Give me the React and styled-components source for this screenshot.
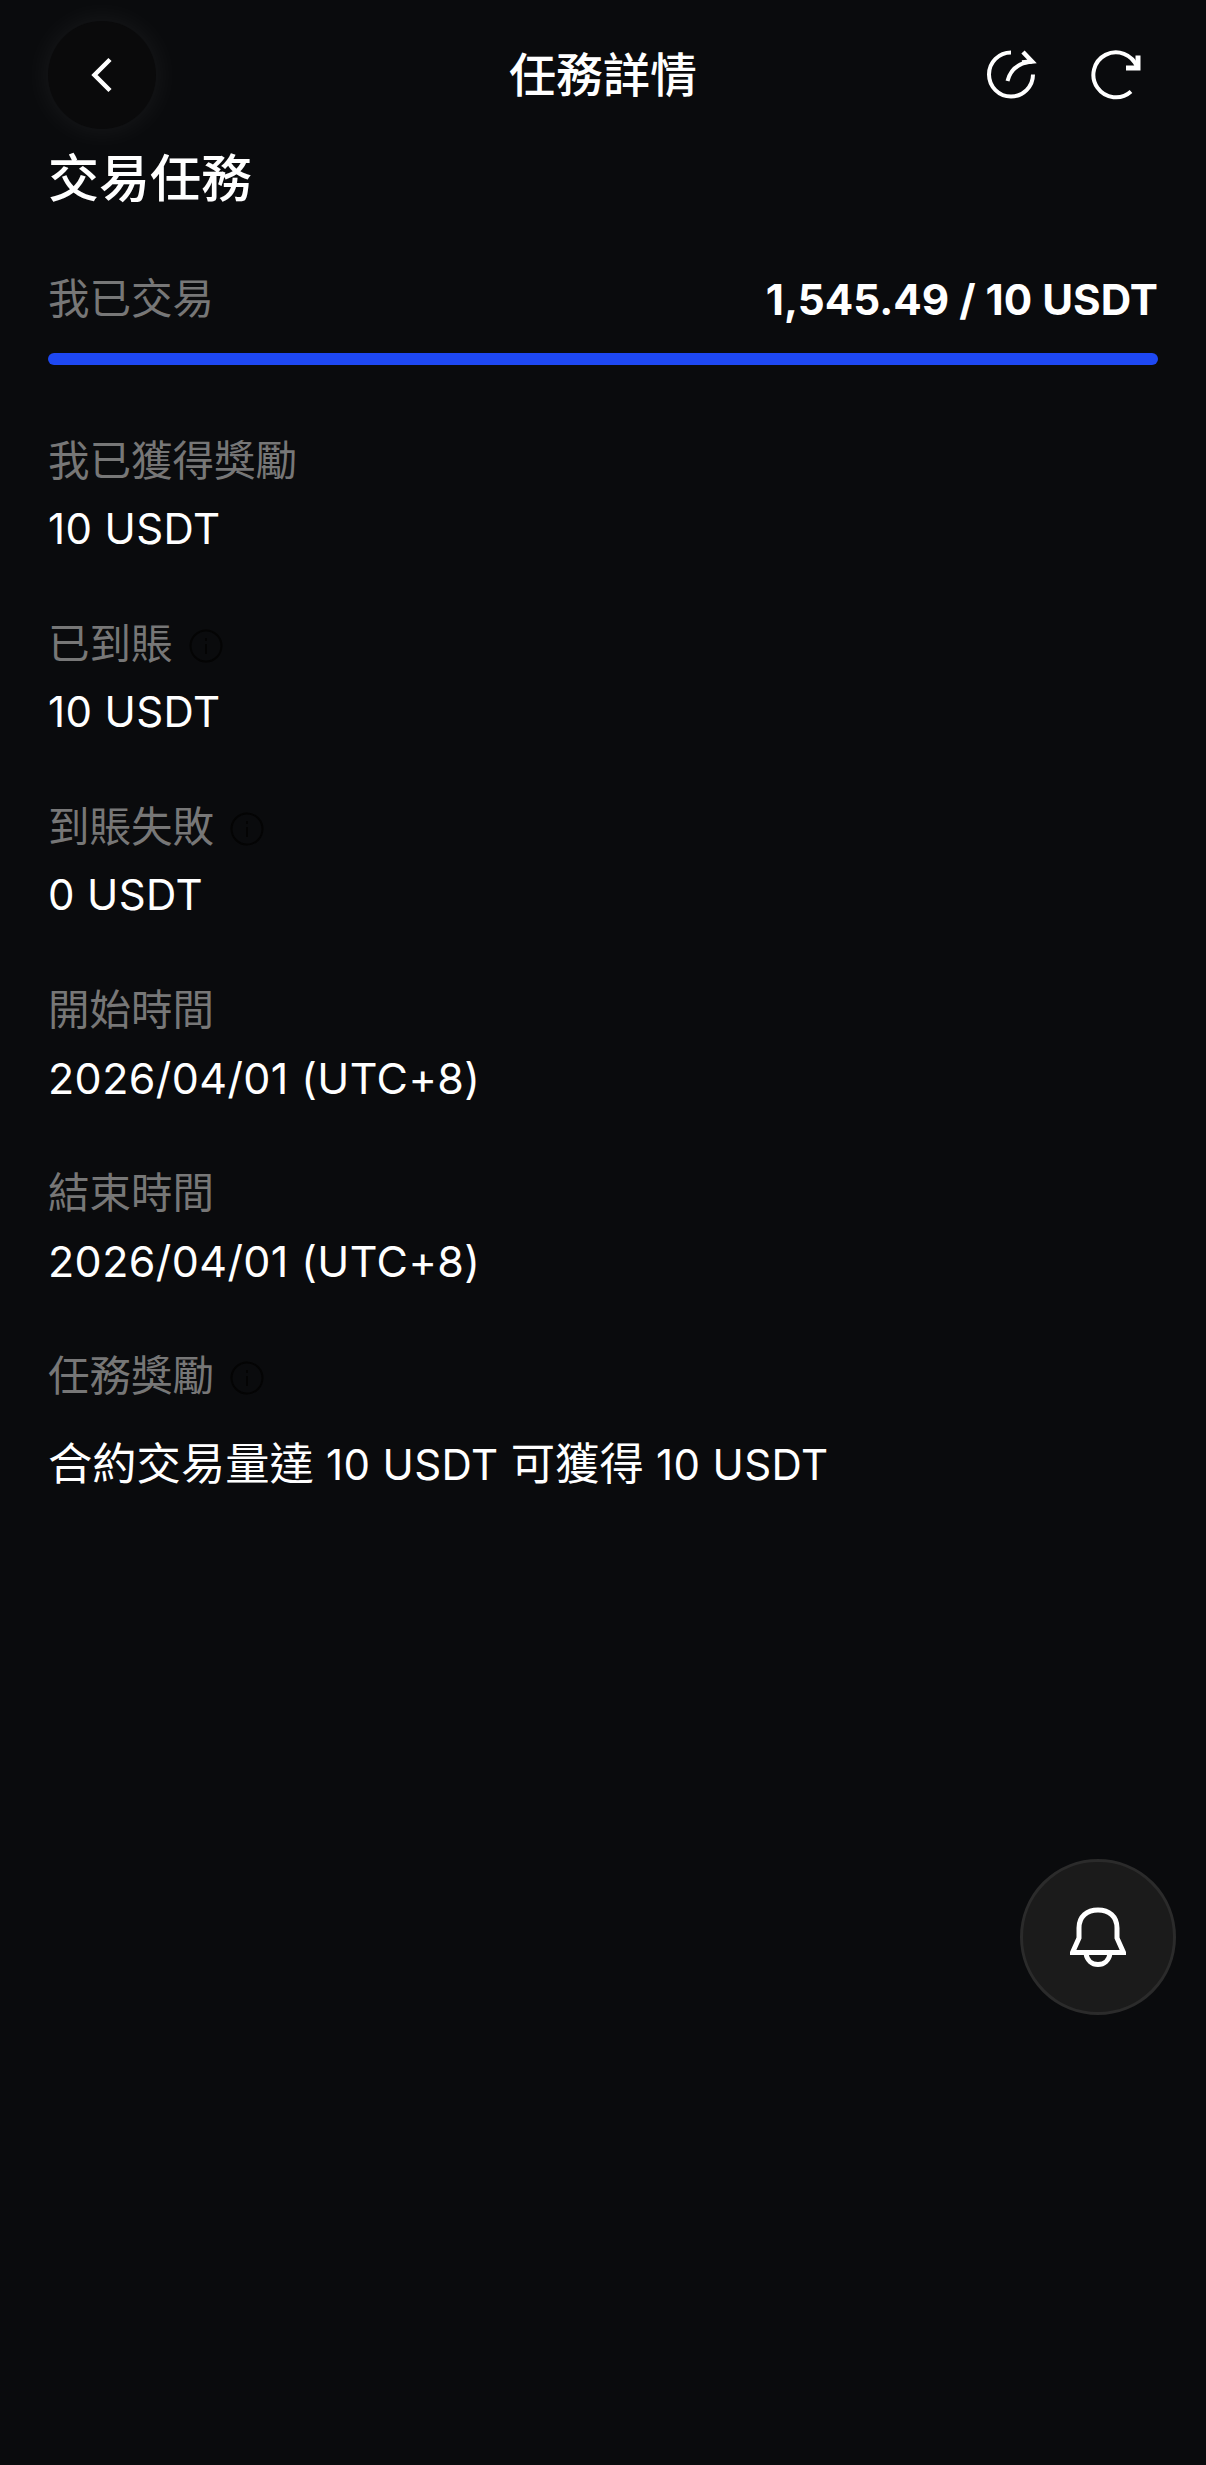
import React from "react";
import styled, { createGlobalStyle } from "styled-components";

const Global = createGlobalStyle`
  html, body { margin: 0; padding: 0; background: #0a0b0d; }
  body { font-family: Inter, "Noto Sans CJK TC", sans-serif; }
`;

const Page = styled.div`
  position: relative;
  width: 1206px;
  height: 2465px;
  overflow: hidden;
  background: #0a0b0d;
  color: #fff;
`;

const Header = styled.header`
  height: 150px;
  padding: 0 48px;
  box-sizing: border-box;
  display: grid;
  grid-template-columns: 1fr auto 1fr;
  align-items: center;
`;

const BackButton = styled.div`
  width: 108px;
  height: 108px;
  border-radius: 50%;
  background: #0a0a0b;
  box-shadow: 0 0 30px rgba(255, 255, 255, 0.07);
  display: flex;
  align-items: center;
  justify-content: center;
`;

const HeaderTitle = styled.h1`
  margin: 0;
  font-size: 47px;
  font-weight: 500;
  line-height: 60px;
`;

const HeaderIcons = styled.div`
  display: flex;
  justify-content: flex-end;
  gap: 54px;
  padding-right: 17px;
`;

const Content = styled.main`
  padding: 0 48px;
`;

const TaskTitle = styled.h2`
  margin: 0;
  font-size: 51px;
  font-weight: 500;
  line-height: 58px;
`;

const ProgressHead = styled.div`
  margin-top: 63px;
  display: flex;
  justify-content: space-between;
  align-items: center;
  height: 56px;
`;

const ProgressValue = styled.div`
  font-size: 42.2px;
  font-weight: 700;
`;

const Bar = styled.div`
  margin-top: 26px;
  height: 12px;
  border-radius: 6px;
  background: #1e48f2;
`;

const Rows = styled.div`
  margin-top: 68px;
  display: flex;
  flex-direction: column;
  gap: 59px;
`;

const Row = styled.div`
  display: flex;
  flex-direction: column;
  gap: ${(props) => (props.$wide ? "32px" : "12px")};
`;

const Label = styled.div`
  display: flex;
  align-items: center;
  gap: 16px;
  height: 56px;
  font-size: 41.5px;
  line-height: 58px;
  color: #777;
`;

const InfoMark = styled.svg`
  position: relative;
  top: 2px;
`;

const Value = styled.div`
  height: 56px;
  font-size: ${(props) => (props.$amount ? "42px" : "43px")};
  letter-spacing: 0.4px;
  line-height: 56px;
  color: #fff;
`;

const Cjk = styled.span`
  font-size: 44.3px;
  letter-spacing: 0;
`;

const BellButton = styled.div`
  position: absolute;
  left: 1020px;
  top: 1859px;
  width: 156px;
  height: 156px;
  box-sizing: border-box;
  border-radius: 50%;
  background: #1b1b1b;
  border: 3px solid #2b2b2b;
  display: flex;
  align-items: center;
  justify-content: center;
`;

const Info = () => (
  <InfoMark width="34" height="34" viewBox="0 0 34 34" fill="none" stroke="#040404" strokeWidth="2">
    <circle cx="17" cy="17" r="15.5" />
    <path d="M17 15v10M17 9v3" />
  </InfoMark>
);

const ShareIcon = () => (
  <svg width="50" height="50" viewBox="0 0 50 50" fill="none" stroke="#fff" strokeWidth="4">
    <path d="M24 2.5A22 22 0 1 0 46 24.5" />
    <path d="M20.5 31C23 21 30 13 45 11.5" />
    <path d="M36 2l9 9.5-10 1" strokeWidth="4.5" />
  </svg>
);

const RefreshIcon = () => (
  <svg width="50" height="50" viewBox="0 0 50 50" fill="none" stroke="#fff" strokeWidth="4">
    <path d="M40 41.5A22.5 22.5 0 1 1 46 17" />
    <path d="M47 5.5V18H35" strokeWidth="5" />
  </svg>
);

const BellIcon = () => (
  <svg width="56" height="60" viewBox="0 0 56 60" fill="none" stroke="#fff" strokeWidth="5">
    <path d="M2.5 45.5L9 31V21C9 9.5 17 3 28 3S47 9.5 47 21V31L53.5 45.5Z" />
    <path d="M16 46.5C17 53.5 22 57.5 28 57.5S39 53.5 40 46.5" />
  </svg>
);

const rows = [
  { label: "我已獲得獎勵", value: "10 USDT", amount: true },
  { label: "已到賬", value: "10 USDT", amount: true, info: true },
  { label: "到賬失敗", value: "0 USDT", amount: true, info: true },
  { label: "開始時間", value: "2026/04/01 (UTC+8)" },
  { label: "結束時間", value: "2026/04/01 (UTC+8)" },
  {
    label: "任務獎勵",
    value: (
      <>
        <Cjk>合約交易量達</Cjk> 10 USDT <Cjk>可獲得</Cjk> 10 USDT
      </>
    ),
    amount: true,
    info: true,
    wide: true,
  },
];

export default function App() {
  return (
    <Page>
      <Global />
      <Header>
        <BackButton>
          <svg width="24" height="36" viewBox="0 0 24 36" fill="none" stroke="#fff" strokeWidth="4.5">
            <path d="M20 2.5L4.5 18L20 33.5" />
          </svg>
        </BackButton>
        <HeaderTitle>任務詳情</HeaderTitle>
        <HeaderIcons>
          <ShareIcon />
          <RefreshIcon />
        </HeaderIcons>
      </Header>
      <Content>
        <TaskTitle>交易任務</TaskTitle>
        <ProgressHead>
          <Label>我已交易</Label>
          <ProgressValue>1,545.49 / 10 USDT</ProgressValue>
        </ProgressHead>
        <Bar />
        <Rows>
          {rows.map((row) => (
            <Row key={row.label} $wide={row.wide}>
              <Label>
                {row.label}
                {row.info && <Info />}
              </Label>
              <Value $amount={row.amount}>{row.value}</Value>
            </Row>
          ))}
        </Rows>
      </Content>
      <BellButton>
        <BellIcon />
      </BellButton>
    </Page>
  );
}
